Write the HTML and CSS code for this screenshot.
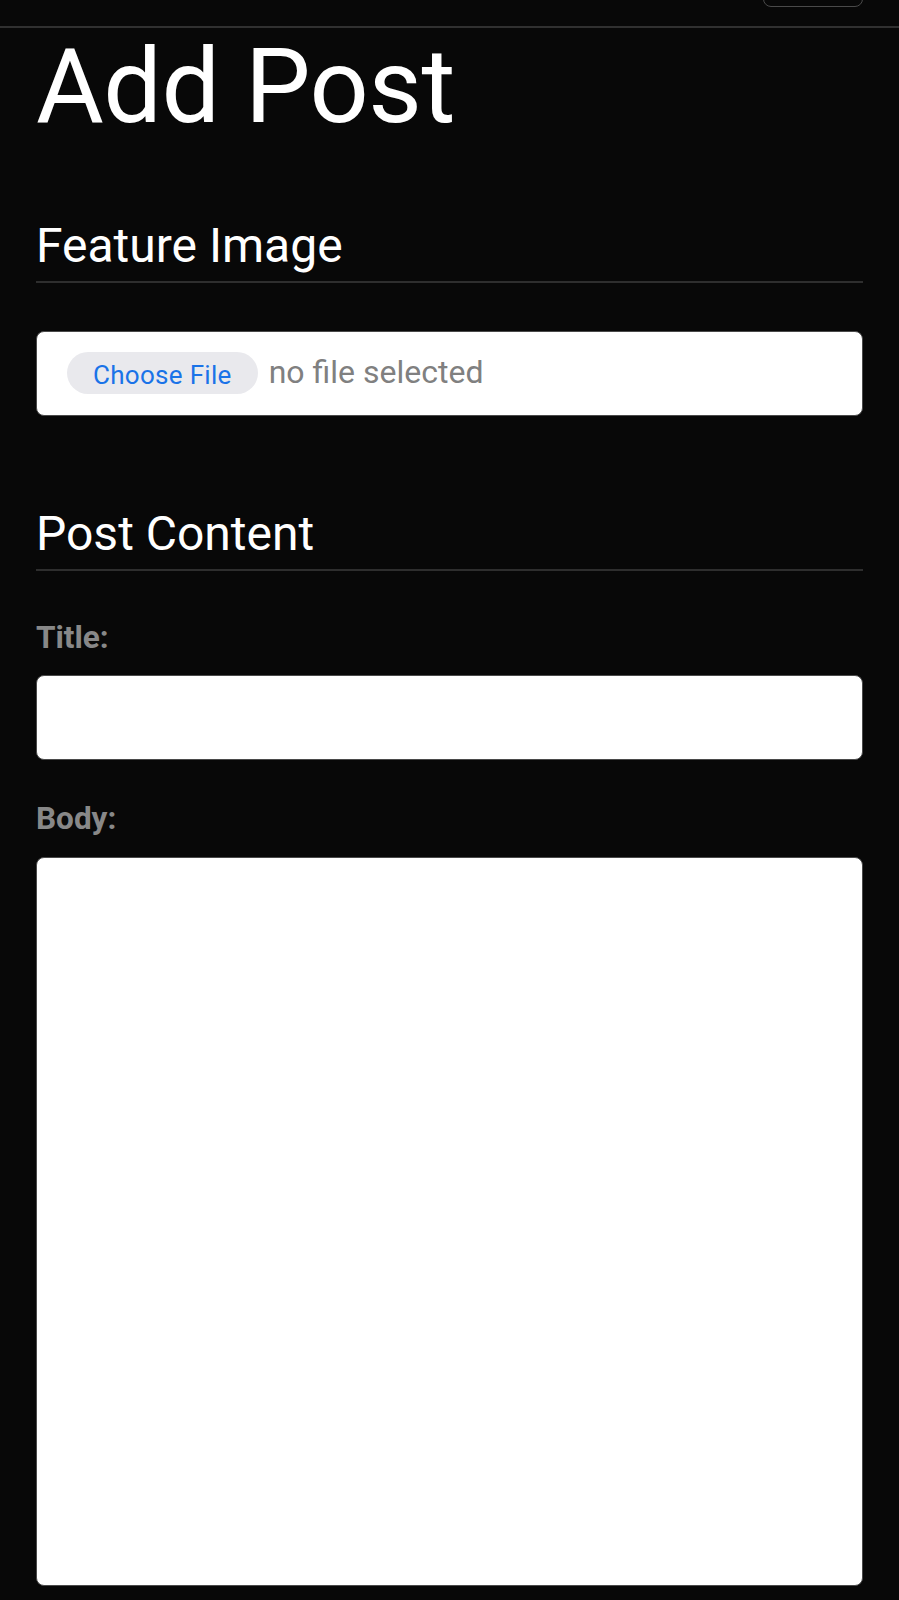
FILE: index.html
```html
<!DOCTYPE html>
<html lang="en">
<head>
<meta charset="utf-8">
<title>Add Post</title>
<link rel="stylesheet" href="styles.css">
</head>
<body>
<header class="topbar">
  <button class="menu-btn" type="button" aria-label="Menu"></button>
</header>
<main class="page">
  <h1 class="page-title">Add Post</h1>
  <form class="post-form">
    <section class="section">
      <h2 class="section-title">Feature Image</h2>
      <div class="file-box">
        <span class="file-btn">Choose File</span>
        <span class="file-name">no file selected</span>
      </div>
    </section>
    <section class="section section-content">
      <h2 class="section-title">Post Content</h2>
      <label class="field-label" for="title">Title:</label>
      <input class="text-input" id="title" type="text">
      <label class="field-label field-label-body" for="body">Body:</label>
      <textarea class="text-area" id="body"></textarea>
    </section>
  </form>
</main>
</body>
</html>
```
FILE: styles.css
```css
html, body {
  margin: 0;
  padding: 0;
  background: #080808;
  color: #ffffff;
  font-family: Roboto, "Noto Sans", "Liberation Sans", sans-serif;
}

.topbar {
  height: 26px;
  border-bottom: 2px solid #303030;
  display: flex;
  justify-content: flex-end;
  align-items: flex-end;
  padding: 0 36px;
  overflow: hidden;
}

.menu-btn {
  width: 100px;
  height: 40px;
  margin-bottom: 19px;
  background: transparent;
  border: 1.5px solid #4a4a4a;
  border-radius: 8px;
  padding: 0;
}

.page {
  padding: 0 36px 40px 36px;
}

.page-title {
  margin: 2px 0 0 0;
  font-size: 104px;
  line-height: 1.1;
  font-weight: 400;
  letter-spacing: -0.5px;
}

.post-form {
  display: flex;
  flex-direction: column;
}

.section {
  display: flex;
  flex-direction: column;
}

.section-title {
  margin: 73px 0 0 0;
  font-size: 48px;
  line-height: 1.2;
  font-weight: 400;
  padding-bottom: 6px;
  border-bottom: 2px solid #2e2e2e;
}

.section-content .section-title {
  margin-top: 89px;
}

.file-box {
  margin-top: 48px;
  height: 85px;
  box-sizing: border-box;
  background: #ffffff;
  border: 1.5px solid #4a4a4a;
  border-radius: 8px;
  display: flex;
  align-items: center;
  padding-left: 30px;
  gap: 11px;
}

.file-btn {
  display: inline-flex;
  align-items: center;
  box-sizing: border-box;
  height: 42px;
  padding: 3px 26px 0 26px;
  border-radius: 21px;
  background: #e9e9ed;
  color: #1a73e8;
  font-size: 26px;
  letter-spacing: 0.3px;
}

.file-name {
  color: #808080;
  font-size: 32px;
  margin-bottom: 2px;
}

.field-label {
  margin-top: 48px;
  font-size: 31.5px;
  line-height: 1.2;
  font-weight: 700;
  color: #888888;
}

.field-label-body {
  margin-top: 40px;
}

.text-input,
.text-area {
  margin: 19px 0 0 0;
  box-sizing: border-box;
  width: 100%;
  background: #ffffff;
  border: 1.5px solid #4a4a4a;
  border-radius: 8px;
  font-family: Roboto, "Noto Sans", "Liberation Sans", sans-serif;
  font-size: 30px;
  padding: 10px 14px;
  outline: none;
}

.text-input {
  height: 85px;
}

.text-area {
  height: 729px;
  resize: none;
}
```
